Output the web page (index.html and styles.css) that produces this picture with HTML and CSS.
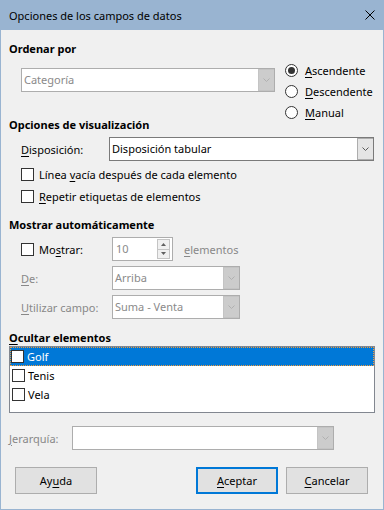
FILE: index.html
```html
<!DOCTYPE html>
<html lang="es">

<head>
    <meta charset="UTF-8">
    <meta name="viewport" content="width=device-width, initial-scale=1.0">
    <title>Opciones de los campos de datos</title>
    <link rel="stylesheet" href="styles.css">
</head>

<body>
    <div class="window">
        <!-- Title bar -->
        <div class="titlebar">
            <span class="title">Opciones de los campos de datos</span>
            <svg class="close" width="10" height="10" viewBox="0 0 10 10">
                <path d="M0.5 0.5L9.5 9.5M9.5 0.5L0.5 9.5" stroke="#000" stroke-width="1" fill="none"/>
            </svg>
        </div>

        <div class="content">
            <!-- Ordenar por -->
            <div class="sort">
                <div class="sort-main">
                    <div class="heading">Ordenar por</div>
                    <div class="combo combo-sort is-disabled">
                        <span class="combo-value">Categoría</span>
                        <span class="combo-btn">
                            <svg width="7" height="4" viewBox="0 0 7 4"><polyline points="0.5,0.5 3.5,3.5 6.5,0.5" fill="none" stroke="currentColor"/></svg>
                        </span>
                    </div>
                </div>
                <div class="radios">
                    <div class="radio"><span class="radio-dot is-checked"></span><span><u>A</u>scendente</span></div>
                    <div class="radio"><span class="radio-dot"></span><span><u>D</u>escendente</span></div>
                    <div class="radio"><span class="radio-dot"></span><span><u>M</u>anual</span></div>
                </div>
            </div>

            <!-- Opciones de visualizacion -->
            <div class="heading">Opciones de visualización</div>
            <div class="row row-disp">
                <span class="label label-disp"><u>D</u>isposición:</span>
                <div class="combo combo-disp">
                    <span class="combo-value">Disposición tabular</span>
                    <span class="combo-btn">
                        <svg width="7" height="4" viewBox="0 0 7 4"><polyline points="0.5,0.5 3.5,3.5 6.5,0.5" fill="none" stroke="currentColor"/></svg>
                    </span>
                </div>
            </div>
            <div class="check-row"><span class="check"></span><span>Línea <u>v</u>acía después de cada elemento</span></div>
            <div class="check-row"><span class="check"></span><span><u>R</u>epetir etiquetas de elementos</span></div>

            <!-- Mostrar automaticamente -->
            <div class="heading heading-auto">Mostrar automáticamente</div>
            <div class="row row-auto">
                <span class="label label-auto"><span class="check"></span><span>Mo<u>s</u>trar:</span></span>
                <div class="spin">
                    <span class="combo-value">10</span>
                    <span class="spin-btns">
                        <span class="spin-btn"><svg width="5" height="3" viewBox="0 0 5 3"><polygon points="0,3 2.5,0 5,3" fill="#606060"/></svg></span>
                        <span class="spin-btn"><svg width="5" height="3" viewBox="0 0 5 3"><polygon points="0,0 2.5,3 5,0" fill="#606060"/></svg></span>
                    </span>
                </div>
                <span class="muted units"><u>e</u>lementos</span>
            </div>
            <div class="row row-auto">
                <span class="label label-auto muted"><u>D</u>e:</span>
                <div class="combo combo-small is-disabled">
                    <span class="combo-value">Arriba</span>
                    <span class="combo-btn">
                        <svg width="7" height="4" viewBox="0 0 7 4"><polyline points="0.5,0.5 3.5,3.5 6.5,0.5" fill="none" stroke="currentColor"/></svg>
                    </span>
                </div>
            </div>
            <div class="row row-auto">
                <span class="label label-auto muted"><u>U</u>tilizar campo:</span>
                <div class="combo combo-small is-disabled">
                    <span class="combo-value">Suma - Venta</span>
                    <span class="combo-btn">
                        <svg width="7" height="4" viewBox="0 0 7 4"><polyline points="0.5,0.5 3.5,3.5 6.5,0.5" fill="none" stroke="currentColor"/></svg>
                    </span>
                </div>
            </div>

            <!-- Ocultar elementos -->
            <div class="heading heading-hide"><u>O</u>cultar elementos</div>
            <div class="listbox">
                <div class="list-item is-selected"><span class="check"></span><span>Golf</span></div>
                <div class="list-item"><span class="check"></span><span>Tenis</span></div>
                <div class="list-item"><span class="check"></span><span>Vela</span></div>
            </div>

            <div class="row row-hier">
                <span class="label label-hier muted"><u>J</u>erarquía:</span>
                <div class="combo combo-hier is-disabled">
                    <span class="combo-value"></span>
                    <span class="combo-btn">
                        <svg width="7" height="4" viewBox="0 0 7 4"><polyline points="0.5,0.5 3.5,3.5 6.5,0.5" fill="none" stroke="currentColor"/></svg>
                    </span>
                </div>
            </div>

            <!-- Buttons -->
            <div class="buttons">
                <button class="btn btn-help">Ay<u>u</u>da</button>
                <button class="btn btn-default"><u>A</u>ceptar</button>
                <button class="btn btn-cancel"><u>C</u>ancelar</button>
            </div>
        </div>
    </div>
</body>

</html>
```

FILE: styles.css
```css
/* Base styles */
body {
    margin: 0;
    padding: 0;
    background-color: #fff;
    font-family: "Noto Sans", "Liberation Sans", sans-serif;
    font-size: 11px;
    line-height: 15px;
    color: #000;
}

u {
    text-underline-offset: 2px;
}

/* Window frame */
.window {
    width: 384px;
    height: 510px;
    box-sizing: border-box;
    background-color: #f0f0f0;
    border: 1px solid #99b4d1;
    border-top: none;
    display: flex;
    flex-direction: column;
}

.titlebar {
    height: 30px;
    margin: 0 -1px;
    padding: 0 9px;
    background-color: #99b4d1;
    display: flex;
    align-items: center;
    justify-content: space-between;
}

.title {
    font-size: 11px;
}

.content {
    padding: 0 8px;
}

/* Section headings */
.heading {
    font-weight: bold;
    height: 15px;
}

.heading-auto {
    margin-top: 10px;
}

.heading-hide {
    margin-top: 11px;
}

/* Ordenar por */
.sort {
    display: flex;
    align-items: flex-start;
}

.sort-main {
    width: 276px;
    padding-top: 11px;
}

.combo-sort {
    margin-top: 12px;
    margin-left: 12px;
    width: 254px;
}

.radios {
    margin-top: 30px;
    margin-bottom: -6px;
}

.radio {
    height: 21px;
    display: flex;
    align-items: center;
}

.radio-dot {
    width: 13px;
    height: 13px;
    box-sizing: border-box;
    border: 1px solid #333;
    border-radius: 50%;
    background-color: #fff;
    margin-right: 7px;
    position: relative;
}

.radio-dot.is-checked::after {
    content: "";
    position: absolute;
    left: 2px;
    top: 2px;
    width: 7px;
    height: 7px;
    border-radius: 50%;
    background-color: #333;
}

/* Combo boxes */
.combo {
    height: 24px;
    box-sizing: border-box;
    border: 1px solid #7a7a7a;
    background-color: #fff;
    display: flex;
    color: #5a5a5a;
}

.combo-value {
    flex: 1;
    padding-left: 2px;
    line-height: 22px;
    color: #000;
    white-space: nowrap;
}

.combo-btn {
    width: 16px;
    box-sizing: border-box;
    border: 1px solid #adadad;
    border-right: none;
    background-color: #e5e5e5;
    display: flex;
    align-items: center;
    justify-content: center;
}

.combo.is-disabled {
    border-color: #adadad;
    color: #b0b0b0;
}

.combo.is-disabled .combo-value {
    color: #8a8a8a;
}

.combo.is-disabled .combo-btn {
    background-color: #cccccc;
    border-color: #c4c4c4;
}

/* Rows with labels */
.row {
    display: flex;
    align-items: center;
    margin-left: 12px;
}

.label {
    display: flex;
    align-items: center;
    white-space: nowrap;
}

.row-disp {
    margin-top: 5px;
}

.label-disp {
    width: 88px;
}

.combo-disp {
    width: 265px;
}

.row-auto {
    margin-top: 5px;
}

.label-auto {
    width: 91px;
}

.combo-small {
    width: 128px;
}

.muted {
    color: #888;
}

.units {
    margin-left: 11px;
}

/* Spin field */
.spin {
    width: 61px;
    height: 24px;
    box-sizing: border-box;
    border: 1px solid #adadad;
    background-color: #fff;
    display: flex;
}

.spin .combo-value {
    color: #8a8a8a;
    padding-left: 3px;
}

.spin-btns {
    width: 13px;
    margin: 1px 2px 1px 0;
    display: flex;
    flex-direction: column;
}

.spin-btn {
    flex: 1;
    box-sizing: border-box;
    border: 1px solid #c4c4c4;
    background-color: #f0f0f0;
    display: flex;
    align-items: center;
    justify-content: center;
}

.spin-btn + .spin-btn {
    border-top: none;
}

/* Checkboxes */
.check-row {
    height: 22px;
    margin-left: 12px;
    display: flex;
    align-items: center;
}

.row-disp + .check-row {
    margin-top: 2px;
}

.check {
    width: 13px;
    height: 13px;
    box-sizing: border-box;
    border: 1px solid #333;
    background-color: #fff;
    margin-right: 5px;
    flex-shrink: 0;
}

/* List box */
.listbox {
    margin-top: 1px;
    height: 67px;
    box-sizing: border-box;
    border: 1px solid #828790;
    background-color: #fff;
}

.list-item {
    height: 19px;
    box-sizing: border-box;
    padding-left: 1px;
    display: flex;
    align-items: center;
    border: 1px solid transparent;
}

.list-item .check {
    margin-right: 3px;
}

.list-item.is-selected {
    background-color: #0078d7;
    color: #fff;
    border: 1px dotted #f29b3a;
}

.list-item.is-selected .check {
    margin-left: -1px;
}

/* Jerarquia */
.row-hier {
    margin-top: 13px;
    margin-left: 0;
}

.label-hier {
    width: 63px;
}

.combo-hier {
    width: 262px;
}

/* Buttons */
.buttons {
    margin-top: 17px;
    display: flex;
}

.btn {
    width: 82px;
    height: 27px;
    box-sizing: border-box;
    border: 1px solid #adadad;
    background-color: #e1e1e1;
    font-family: "Noto Sans", "Liberation Sans", sans-serif;
    font-size: 11px;
    color: #000;
    padding: 0;
}

.btn-help {
    margin-left: 6px;
}

.btn-default {
    margin-left: auto;
    border: 2px solid #0078d7;
}

.btn-cancel {
    margin-left: 8px;
    margin-right: 7px;
}
```
